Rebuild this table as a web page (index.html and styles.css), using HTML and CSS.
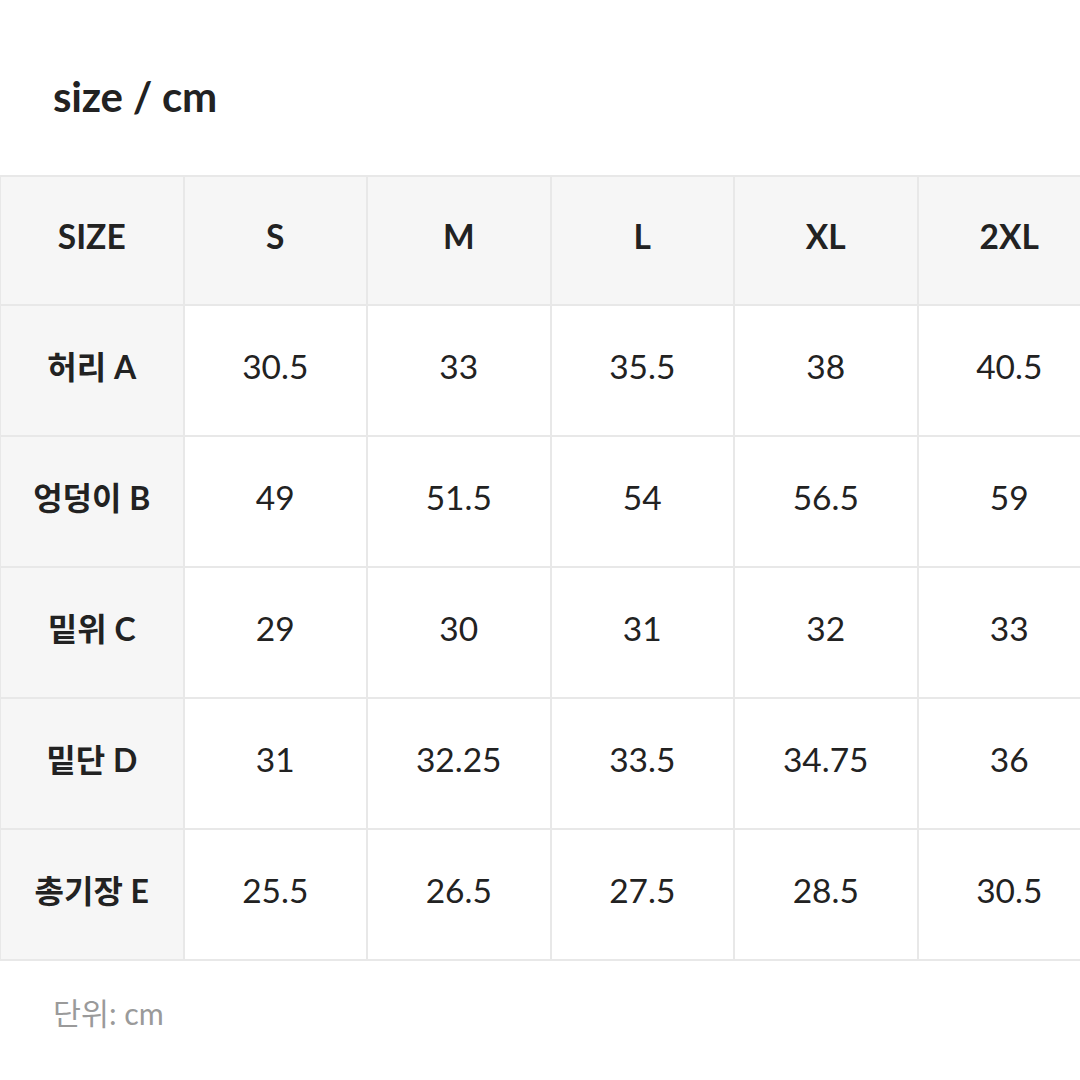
FILE: index.html
```html
<!DOCTYPE html>
<html lang="ko">
<head>
<meta charset="utf-8">
<link rel="stylesheet" href="styles.css">
</head>
<body>
<div class="page">
  <h1 class="title">size / cm</h1>
  <table class="size-table">
    <colgroup>
      <col><col><col><col><col><col>
    </colgroup>
    <thead>
      <tr><th>SIZE</th><th>S</th><th>M</th><th>L</th><th>XL</th><th>2XL</th></tr>
    </thead>
    <tbody>
      <tr><th>허리 A</th><td>30.5</td><td>33</td><td>35.5</td><td>38</td><td>40.5</td></tr>
      <tr><th>엉덩이 B</th><td>49</td><td>51.5</td><td>54</td><td>56.5</td><td>59</td></tr>
      <tr><th>밑위 C</th><td>29</td><td>30</td><td>31</td><td>32</td><td>33</td></tr>
      <tr><th>밑단 D</th><td>31</td><td>32.25</td><td>33.5</td><td>34.75</td><td>36</td></tr>
      <tr><th>총기장 E</th><td>25.5</td><td>26.5</td><td>27.5</td><td>28.5</td><td>30.5</td></tr>
    </tbody>
  </table>
  <p class="note">단위: cm</p>
</div>
</body>
</html>
```
FILE: styles.css
```css
html, body {
  margin: 0;
  padding: 0;
  background: #ffffff;
  overflow: hidden;
}
body {
  width: 1080px;
  height: 1080px;
  font-family: "Lato", "Noto Sans CJK KR", sans-serif;
  color: #222222;
}
.page {
  display: flex;
  flex-direction: column;
}
.title {
  margin: 0;
  padding: 71px 0 0 53px;
  height: 175px;
  box-sizing: border-box;
  font-size: 42px;
  line-height: 50px;
  font-weight: 700;
  letter-spacing: -0.2px;
  flex: none;
}
.size-table {
  border-collapse: collapse;
  table-layout: fixed;
  width: 1101px;
  margin-left: -1px;
  flex: none;
}
.size-table col {
  width: 183.5px;
}
.size-table th,
.size-table td {
  border: 2px solid #e8e8e8;
  height: 131px;
  padding: 0 0 7px 0;
  text-align: center;
  vertical-align: middle;
  font-size: 33.5px;
  line-height: 1;
  box-sizing: border-box;
}
.size-table thead th {
  height: 129px;
}
.size-table tbody th {
  font-size: 32px;
}
.size-table th {
  background: #f6f6f6;
  font-weight: 700;
}
.size-table td {
  background: #ffffff;
  font-weight: 400;
}
.note {
  margin: 0;
  padding: 34px 0 0 53px;
  font-size: 30.4px;
  line-height: 36px;
  color: #9a9a9a;
}
```
